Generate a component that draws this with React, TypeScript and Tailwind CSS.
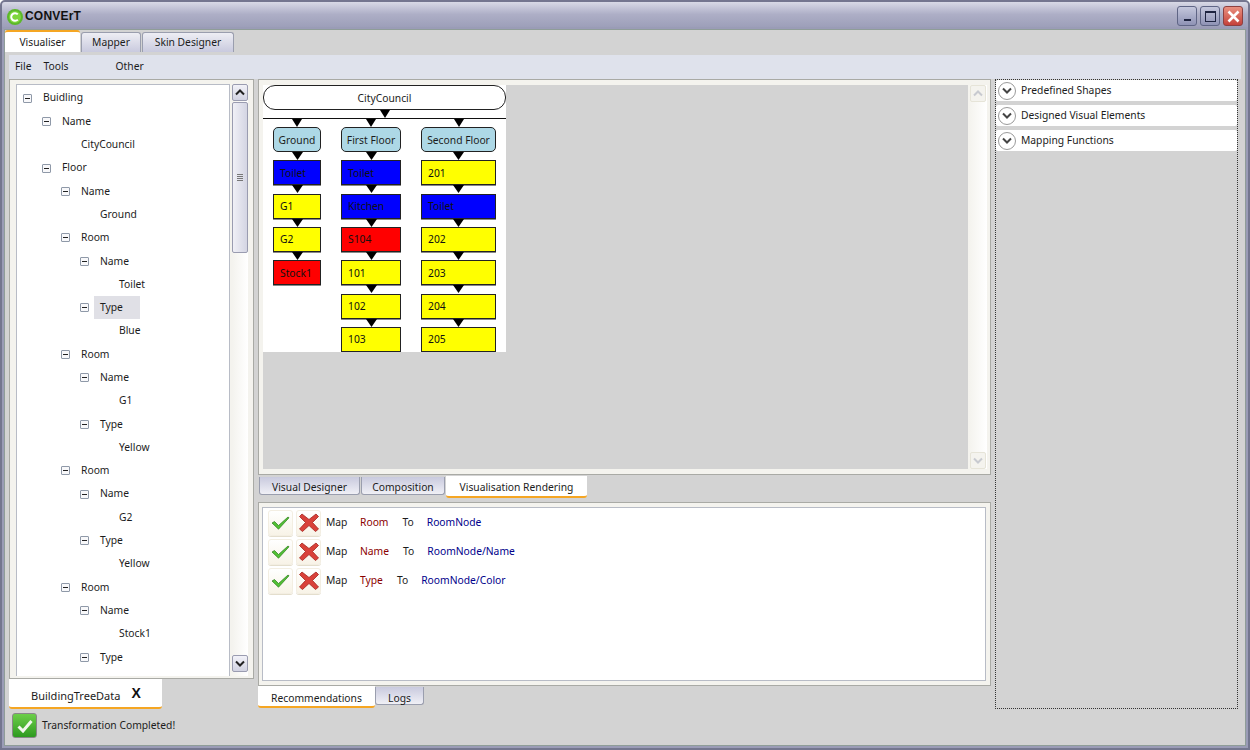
import React from "react";

const ArrowDown = ({ w = 12, h = 8 }: { w?: number; h?: number }) => (
  <svg width={w} height={h} viewBox="0 0 12 8" preserveAspectRatio="none" className="block shrink-0">
    <polygon points="0,0 12,0 6,8" fill="#000" />
  </svg>
);

const Chev = ({ up, color = "#222" }: { up?: boolean; color?: string }) => (
  <svg width="10" height="7" viewBox="0 0 10 7">
    <path d={up ? "M1 5.5 L5 1.5 L9 5.5" : "M1 1.5 L5 5.5 L9 1.5"} fill="none" stroke={color} strokeWidth="2" />
  </svg>
);

const Minus = () => (
  <span className="flex items-center justify-center w-[9px] h-[9px] border border-[#8f99a8] rounded-[1px] bg-[#f8f8fa] shrink-0">
    <span className="w-[5px] h-px bg-[#222]" />
  </span>
);

const tree: [number, string, boolean, boolean?][] = [
  [0, "Buidling", true],
  [1, "Name", true],
  [2, "CityCouncil", false],
  [1, "Floor", true],
  [2, "Name", true],
  [3, "Ground", false],
  [2, "Room", true],
  [3, "Name", true],
  [4, "Toilet", false],
  [3, "Type", true, true],
  [4, "Blue", false],
  [2, "Room", true],
  [3, "Name", true],
  [4, "G1", false],
  [3, "Type", true],
  [4, "Yellow", false],
  [2, "Room", true],
  [3, "Name", true],
  [4, "G2", false],
  [3, "Type", true],
  [4, "Yellow", false],
  [2, "Room", true],
  [3, "Name", true],
  [4, "Stock1", false],
  [3, "Type", true],
];

const indents = ["pl-[6px]", "pl-[25px]", "pl-[44px]", "pl-[63px]", "pl-[82px]"];

const TreeRow = ({ level, text, exp, sel }: { level: number; text: string; exp: boolean; sel?: boolean }) => (
  <div className={`h-[23.3px] flex items-center shrink-0 ${indents[level]}`}>
    <span className="w-[9px] flex shrink-0">{exp && <Minus />}</span>
    <span className={`ml-[5px] h-[23px] flex items-center px-[6px] ${sel ? "bg-[#e0e0e6] w-[46px]" : ""}`}>{text}</span>
  </div>
);

const ScrollBtn = ({ up, faded }: { up?: boolean; faded?: boolean }) => (
  <div
    className={`w-[16px] h-[17px] flex items-center justify-center rounded-[2px] border shrink-0 ${
      faded ? "border-[#e6e4d8] bg-[#f4f3ee]" : "border-[#9a9cb0] bg-gradient-to-b from-[#f2f2f8] to-[#d2d3e2]"
    }`}
  >
    <Chev up={up} color={faded ? "#c8cad0" : "#222"} />
  </div>
);

const TopTab = ({ label, active, w }: { label: string; active?: boolean; w: string }) => (
  <div
    className={`${w} flex items-center justify-center rounded-t-[3px] ${
      active
        ? "h-[22px] pt-[1px] bg-white border-t-2 border-[#f5a623] border-x-0"
        : "h-[20px] mt-[2px] border border-b-0 border-[#9a9eae] bg-gradient-to-b from-[#eeeef4] to-[#c9cade]"
    }`}
  >
    {label}
  </div>
);

const BottomTab = ({ label, active, w, lift }: { label: string; active?: boolean; w: string; lift: string }) => (
  <div
    className={`${w} ${lift} flex items-center justify-center rounded-b-[3px] shrink-0 ${
      active
        ? "h-[22px] bg-white border-b-2 border-[#f5a623]"
        : "h-[18px] mt-[1px] border border-t-0 border-[#9a9eae] bg-gradient-to-b from-[#c9cade] to-[#f0f0f6]"
    }`}
  >
    {label}
  </div>
);

const Arrow = () => (
  <div className="h-[8.33px] flex justify-center overflow-visible">
    <ArrowDown w={11} h={8} />
  </div>
);

type Node = [string, "b" | "y" | "r"];
const nodeBg = { b: "bg-[#0000ff]", y: "bg-[#ffff00]", r: "bg-[#ff0000]" };

const Column = ({ title, w, nodes }: { title: string; w: string; nodes: Node[] }) => (
  <div className={`${w} flex flex-col shrink-0`}>
    <div className="flex justify-center h-[8px]">
      <ArrowDown w={10} h={8} />
    </div>
    <div className="h-[25px] pt-[2px] rounded-[5px] border border-[#222] bg-[#add8e6] flex items-center justify-center whitespace-nowrap">
      {title}
    </div>
    {nodes.map(([t, c], i) => (
      <React.Fragment key={i}>
        <Arrow />
        <div className={`h-[25px] pt-[1px] border border-[#222] shadow-[0_1px_0_#888] ${nodeBg[c]} flex items-center pl-[6px] text-[#111]`}>{t}</div>
      </React.Fragment>
    ))}
  </div>
);

const Check = () => (
  <svg width="19" height="14" viewBox="0 0 19 14">
    <path d="M1 7 L3.5 5.5 L7.5 9.5 L17 1 L18 1.8 L7.5 13.2 Z" fill="#52c235" stroke="#2a7a1a" strokeWidth="0.7" />
  </svg>
);
const Cross = () => (
  <svg width="20" height="19" viewBox="0 0 20 19">
    <path d="M3 1 L10 6.5 L17 1 L19.5 3.5 L13.5 9.5 L19.5 16 L16.5 18.5 L10 12.5 L3.5 18.5 L0.5 16 L6.5 9.5 L0.5 3.5 Z" fill="#d9413a" stroke="#a3261f" strokeWidth="0.8" />
  </svg>
);

const IconBtn = ({ children }: { children: React.ReactNode }) => (
  <div className="w-[25px] h-[26px] rounded-[3px] border border-[#f3eee2] bg-gradient-to-b from-white to-[#f8f3e7] shadow-[0_1px_0_#e4decd] flex items-center justify-center">
    {children}
  </div>
);

const Rec = ({ a, b, c }: { a: string; b: string; c: string }) => (
  <div className="h-[29px] flex items-center">
    <div className="flex gap-[3px]">
      <IconBtn><Check /></IconBtn>
      <IconBtn><Cross /></IconBtn>
    </div>
    <div className="ml-[5px] flex gap-[13px]">
      <span className="w-[21px]">Map</span>
      <span className="text-[#8b0000] mr-[1px]">{a}</span>
      <span>{b}</span>
      <span className="text-[#00008b]">{c}</span>
    </div>
  </div>
);

const Expander = ({ label }: { label: string }) => (
  <div className="h-[21px] bg-white flex items-center pl-[2px] rounded-[2px]">
    <span className="w-[18px] h-[18px] rounded-full border border-[#9a9a9a] bg-white flex items-center justify-center">
      <Chev color="#444" />
    </span>
    <span className="ml-[5px]">{label}</span>
  </div>
);

export default function App() {
  return (
    <div
      className="w-[1250px] h-[750px] flex flex-col overflow-hidden bg-[#9a9cb6] text-[#1c1c1c] text-[10.3px] border-2 border-[#74768f] rounded-t-[5px]"
      style={{ fontFamily: '"Noto Sans", sans-serif' }}
    >
      {/* Title bar */}
      <div className="h-[25px] shrink-0 flex items-center bg-gradient-to-b from-[#d8d9e6] via-[#adaec6] to-[#9d9fb9] pl-[5px] pr-[5px]">
        <svg width="16" height="16" viewBox="0 0 16 16" className="shrink-0 mt-[4px]">
          <circle cx="8" cy="8" r="8" fill="#5cb82a" />
          <circle cx="8" cy="8" r="6" fill="#7ed63c" />
          <path d="M10.8 5.4 A3.8 3.8 0 1 0 10.8 10.6" fill="none" stroke="#fff" strokeWidth="2" />
        </svg>
        <span
          className="ml-[2px] mt-[3px] font-bold text-[12px] text-[#111] tracking-[0.2px]"
          style={{ fontFamily: '"Liberation Sans", sans-serif' }}
        >
          CONVErT
        </span>
        <div className="ml-auto flex gap-[3px] mt-[3px]">
          <div className="w-[20px] h-[20px] rounded-[3px] border border-[#5f6585] bg-gradient-to-b from-[#c4c7dc] to-[#8f93b5] flex items-end justify-center pb-[4px]">
            <span className="w-[7px] h-[2px] bg-[#1e2440]" />
          </div>
          <div className="w-[20px] h-[20px] rounded-[3px] border border-[#5f6585] bg-gradient-to-b from-[#c4c7dc] to-[#8f93b5] flex items-center justify-center">
            <span className="w-[11px] h-[11px] border border-[#1e2440] border-t-2" />
          </div>
          <div className="w-[20px] h-[20px] rounded-[3px] border border-[#8d4040] bg-gradient-to-b from-[#e88f80] to-[#c5403a] flex items-center justify-center">
            <svg width="13" height="13" viewBox="0 0 13 13">
              <path d="M1.5 1.5 L11.5 11.5 M11.5 1.5 L1.5 11.5" stroke="#fff" strokeWidth="2.6" />
            </svg>
          </div>
        </div>
      </div>

      {/* Body */}
      <div className="flex-1 mx-[2px] mb-[2px] mt-[2px] bg-[#d3d3d3] border border-[#8f9d98] flex flex-col min-h-0">
        <div className="h-[22px] flex shrink-0 gap-[1px]">
          <TopTab label="Visualiser" active w="w-[75px]" />
          <TopTab label="Mapper" w="w-[60px]" />
          <TopTab label="Skin Designer" w="w-[92px]" />
        </div>
        <div className="mx-[4px] mt-[3px] h-[24px] bg-[#dfe2ec] flex items-center shrink-0">
          <span className="ml-[6px]">File</span>
          <span className="ml-[12px]">Tools</span>
          <span className="ml-[47px]">Other</span>
        </div>

        <div className="flex mx-[4px] h-[630px] shrink-0">
          {/* Left */}
          <div className="w-[245px] flex flex-col shrink-0">
            <div className="h-[600px] border border-[#a9aaa5] bg-[#f4f3ee] flex pl-[6px] pr-[5px] pt-[4px] pb-[2px] gap-[2px]">
              <div className="w-[214px] bg-white border border-[#b8bcc6] border-b-0 overflow-hidden pt-[1.5px] flex flex-col">
                {tree.map(([l, t, e, s], i) => (
                  <TreeRow key={i} level={l} text={t} exp={e} sel={s} />
                ))}
              </div>
              <div className="w-[16px] flex flex-col bg-gradient-to-r from-[#f4f3ee] to-white">
                <ScrollBtn up />
                <div className="h-[151px] mt-[1px] rounded-[2px] border border-[#9a9cb0] bg-gradient-to-r from-[#f0f0f6] to-[#d4d5e3] flex flex-col items-center justify-center gap-[1px]">
                  <span className="w-[6px] h-px bg-[#777]" />
                  <span className="w-[6px] h-px bg-[#777]" />
                  <span className="w-[6px] h-px bg-[#777]" />
                  <span className="w-[6px] h-px bg-[#777]" />
                </div>
                <div className="mt-auto mb-[4px]">
                  <ScrollBtn />
                </div>
              </div>
            </div>
            <div className="w-[153px] h-[30px] pt-[6px] bg-white border-b-2 border-[#f5a623] rounded-b-[3px] flex items-center pl-[22px]">
              <span className="text-[11px]">BuildingTreeData</span>
              <span className="ml-[11px] -mt-[5px] text-[14px] font-bold text-[#111]" style={{ fontFamily: '"Liberation Sans", sans-serif' }}>X</span>
            </div>
          </div>

          {/* Center */}
          <div className="w-[733px] ml-[4px] flex flex-col shrink-0">
            <div className="h-[396px] border border-[#a9aaa5] bg-[#f4f3ee] flex pl-[4px] pr-[2px] pt-[5px] pb-[5px] shrink-0">
              <div className="w-[705px] bg-[#d3d3d3] shrink-0">
                <div className="w-[243px] h-[267px] bg-white overflow-hidden flex flex-col">
                  <div className="h-[25px] pt-[2px] rounded-[12px] border border-[#222] flex items-center justify-center shrink-0">CityCouncil</div>
                  <div className="h-[8px] flex justify-center shrink-0">
                    <ArrowDown w={10} h={8} />
                  </div>
                  <div className="h-px bg-[#111] shrink-0" />
                  <div className="flex pl-[10px] gap-[20px]">
                    <Column title="Ground" w="w-[48px]" nodes={[["Toilet", "b"], ["G1", "y"], ["G2", "y"], ["Stock1", "r"]]} />
                    <Column title="First Floor" w="w-[60px]" nodes={[["Toilet", "b"], ["Kitchen", "b"], ["S104", "r"], ["101", "y"], ["102", "y"], ["103", "y"]]} />
                    <Column title="Second Floor" w="w-[75px]" nodes={[["201", "y"], ["Toilet", "b"], ["202", "y"], ["203", "y"], ["204", "y"], ["205", "y"]]} />
                  </div>
                </div>
              </div>
              <div className="w-[18px] flex flex-col items-center ml-[1px] bg-gradient-to-r from-[#f4f3ee] to-white">
                <ScrollBtn up faded />
                <div className="mt-auto"><ScrollBtn faded /></div>
              </div>
            </div>
            <div className="flex mt-[1px] h-[21px] gap-[1px] pl-[1px] shrink-0">
              <BottomTab label="Visual Designer" w="w-[101px]" lift="pt-[5px]" />
              <BottomTab label="Composition" w="w-[84px]" lift="pt-[5px]" />
              <BottomTab label="Visualisation Rendering" active w="w-[141px]" lift="pt-[3px]" />
            </div>
            <div className="mt-[5px] h-[184px] border border-[#a9aaa5] bg-[#f4f3ee] pl-[3px] pr-[4px] py-[4px] shrink-0">
              <div className="h-full bg-white border border-[#b8bcc6] pl-[5px]">
                <Rec a="Room" b="To" c="RoomNode" />
                <Rec a="Name" b="To" c="RoomNode/Name" />
                <Rec a="Type" b="To" c="RoomNode/Color" />
              </div>
            </div>
            <div className="flex h-[22px] shrink-0">
              <BottomTab label="Recommendations" active w="w-[117px]" lift="pt-[5px]" />
              <BottomTab label="Logs" w="w-[49px]" lift="pt-[6px]" />
            </div>
          </div>

          {/* Right */}
          <div className="w-[243px] ml-[4px] border border-dotted border-[#333] flex flex-col gap-[4px] shrink-0">
            <Expander label="Predefined Shapes" />
            <Expander label="Designed Visual Elements" />
            <Expander label="Mapping Functions" />
          </div>
        </div>

        <div className="flex items-center ml-[7px] mt-[4px]">
          <div className="w-[25px] h-[25px] rounded-[3px] border border-[#888] bg-gradient-to-b from-[#6ccf4a] to-[#2c9a1e] flex items-center justify-center">
            <svg width="16" height="14" viewBox="0 0 16 14">
              <path d="M1.5 7.5 L6 12 L14.5 2" fill="none" stroke="#f2f7ee" strokeWidth="3" />
            </svg>
          </div>
          <span className="ml-[5px]">Transformation Completed!</span>
        </div>
      </div>
    </div>
  );
}
